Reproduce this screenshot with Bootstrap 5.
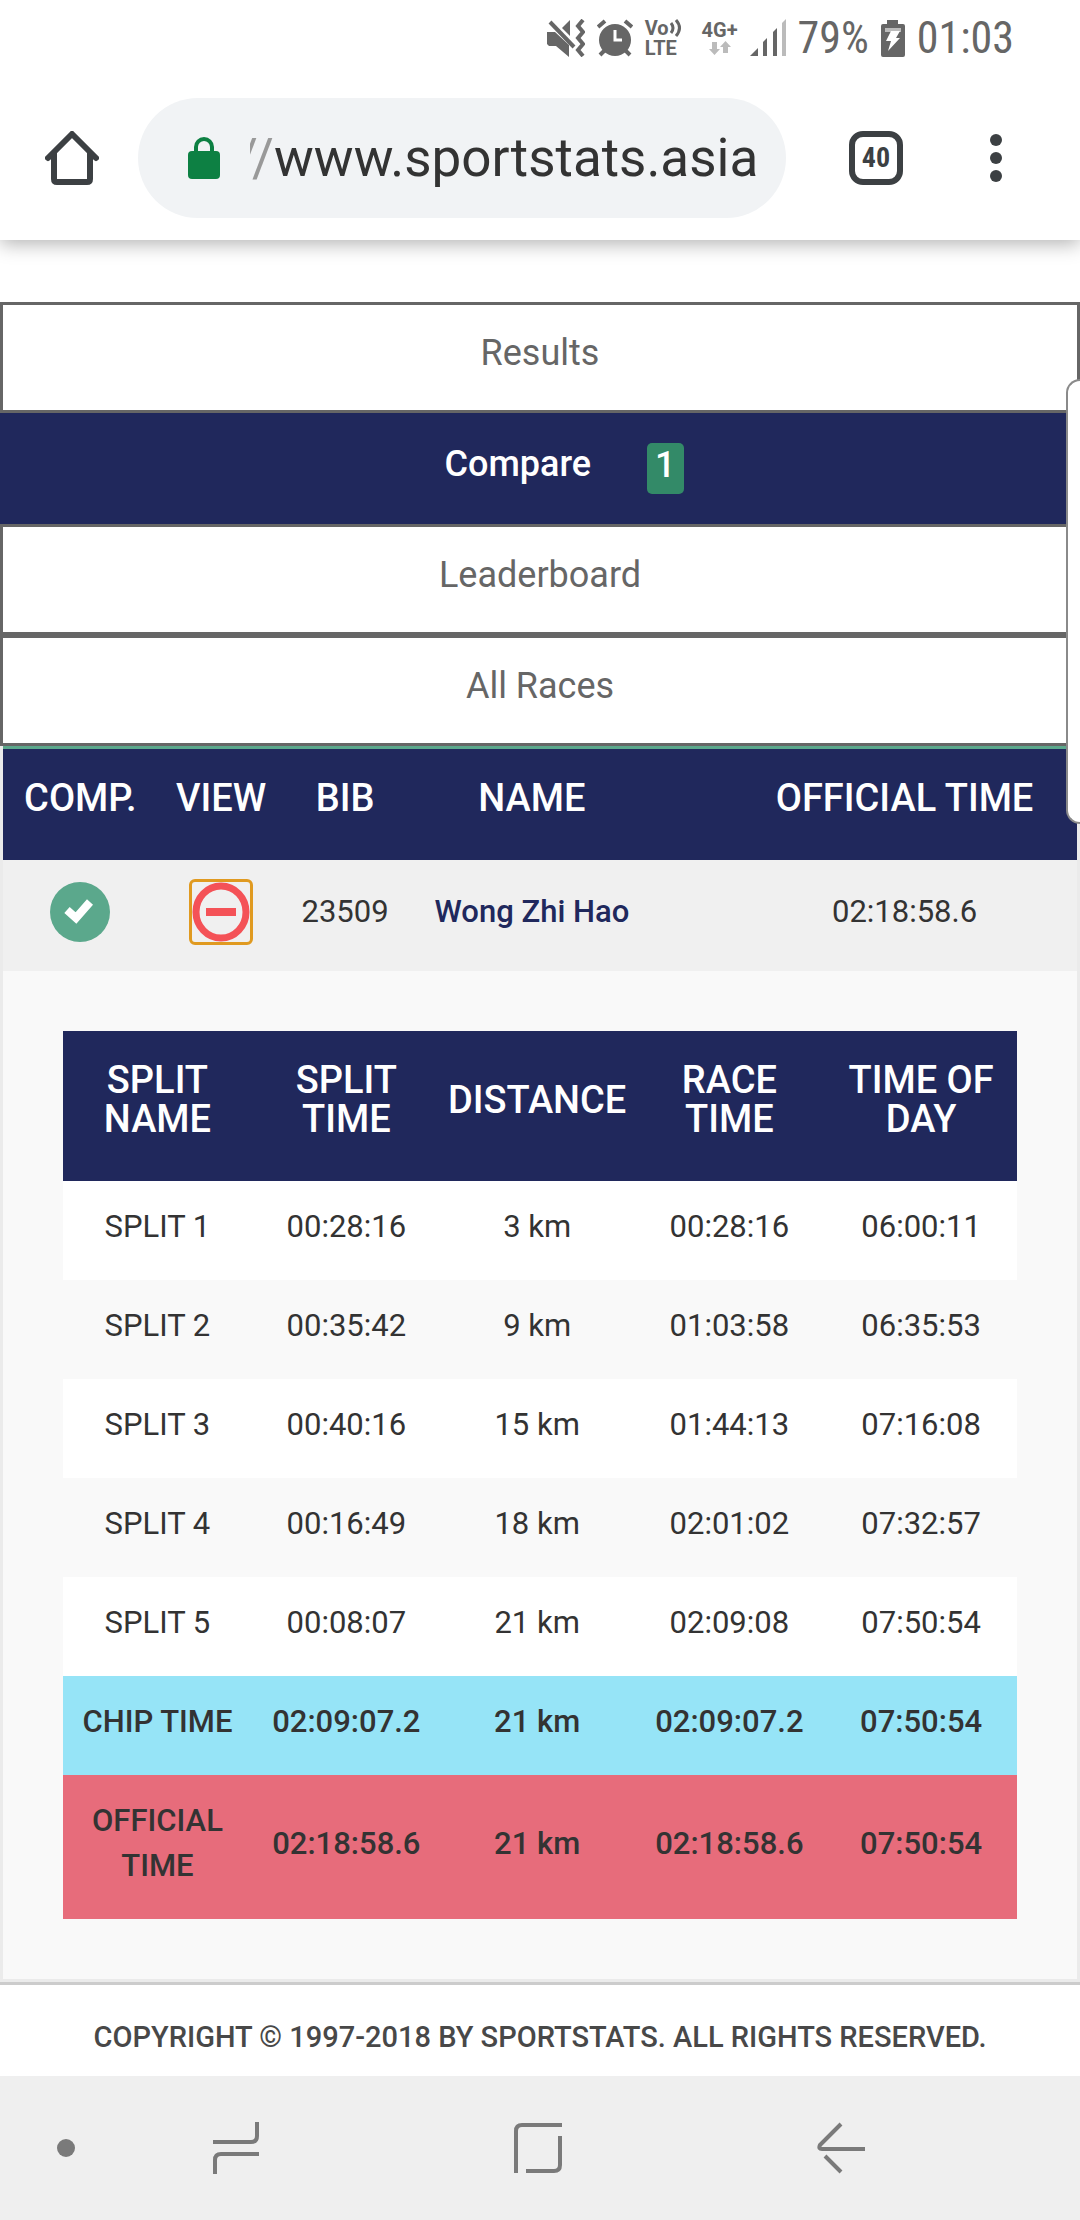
<!DOCTYPE html>
<html lang="en">
<head>
<meta charset="utf-8">
<meta name="viewport" content="width=device-width, initial-scale=1">
<title>Sportstats Asia - Compare</title>
<link href="https://cdn.jsdelivr.net/npm/bootstrap@5.3.0/dist/css/bootstrap.min.css" rel="stylesheet">
<style>
  :root { --navy: #20285c; --line: #666; --green: #5ba88c; }
  body { font-family: Roboto, "Liberation Sans", sans-serif; color: #333; background: #fff; }
  svg { display: block; flex: none; }
  button.plain { border: 0; padding: 0; background: none; color: inherit; flex: none; }

  /* phone status bar */
  .statusbar { height: 76px; padding-right: 66px; gap: 12px; color: #666; background: #fff; z-index: 1; }
  .statusbar .big { font: 400 44px/48px "Roboto Condensed", Roboto, sans-serif; }
  .tiny { font-size: 20px; line-height: 20px; font-weight: 700; }

  /* browser toolbar */
  .browserbar { height: 164px; padding: 0 78px 0 45px; color: #3c4043; box-shadow: 0 4px 18px rgba(0,0,0,.3); }
  .omnibox { height: 120px; margin-left: 39px; margin-right: 63px; padding: 0 24px 0 50px; border-radius: 60px; background: #f1f3f5; }
  .scheme, .omnibox input { font-size: 53px; line-height: 64px; }
  .scheme { flex: none; width: 24px; margin-left: 30px; color: #999; }
  .omnibox input { width: 0; padding: 0; border: 0; background: none; color: #333; outline: 0; }
  .browserbar .tabcount { width: 54px; height: 54px; margin-right: 87px; border: 6px solid #3c4043; border-radius: 14px; font: 700 28px/30px "Roboto Condensed", Roboto, sans-serif; }

  /* page tabs */
  .racetabs { margin-top: 62px; }
  .racetabs .nav-link { padding: 21px 0 30px; border: 3px solid var(--line); border-radius: 0; color: var(--line); font-size: 36px; line-height: 54px; text-align: center; }
  .racetabs .nav-link.active { padding-bottom: 27px; background: var(--navy); border-color: var(--navy); color: #fff; font-weight: 500; }
  .counter { margin-top: 6px; padding: 0 8px 6px; border-radius: 5px; background: #338a68; line-height: 45px; }

  /* results */
  .results { border: 3px solid #ebebeb; border-top: 0; background: #f9f9f9; }
  .results table { table-layout: fixed; width: 100%; text-align: center; }
  .results th { padding: 30px 0 42px; background: var(--navy); color: #fff; font-size: 38px; line-height: 39px; font-weight: 500; vertical-align: middle; }
  .results td { padding: 23px 0 31px; font-size: 31px; line-height: 45px; vertical-align: middle; }
  .racers { border-top: 3px solid var(--green); }
  .racers > tbody > tr > td { padding: 22px 0 29px; background: #f0f0f0; line-height: 60px; }
  .racers tr > .gap-start { padding-left: 74px !important; }
  .racers a { color: var(--navy); font-weight: 500; text-decoration: none; }
  .racers .viewbox { outline: 3px solid #e09a20; border-radius: 3px; }
  .detail { padding: 60px; }
  .splits tbody tr:nth-child(odd) { background: #fff; }
  .splits tbody tr.chip { background: #96e4f7; }
  .splits tbody tr.official { background: #e76c7b; }
  .splits .chip td, .splits .official td { font-weight: 500; }
  .copyright { padding: 37px 0 24px; border-top: 3px solid #ccc; color: #484848; font-size: 29px; line-height: 30px; font-weight: 500; }

  /* phone navigation */
  .softkeys { height: 144px; background: #efefef; color: #7a7a7a; }
  .softkeys .k1 { width: 12.2%; } .softkeys .k2 { width: 19.3%; } .softkeys .k3 { width: 36.7%; } .softkeys .k4 { width: 19.4%; }
  .softkeys button { display: flex; justify-content: center; }

  /* edge panel handle lying over the page */
  .edgehandle { position: absolute; top: 379px; right: 0; width: 14px; height: 445px; background: #fff; border: 2px solid #8a8a8a; border-right: 0; border-radius: 18px 0 0 18px; }
</style>
</head>
<body>
<div class="position-relative overflow-hidden">

  <div class="statusbar position-relative d-flex align-items-center justify-content-end">
    <svg width="38" height="38" viewBox="0 0 38 38" fill="currentColor"><path d="M0 13h8l14 13v12L9 27H2l-2-2zM15 9l8-8v16z"/><path d="M3 3l24 25" stroke="currentColor" stroke-width="4"/><path d="M36 1l-5 6 5 6-5 6 5 6-5 6 5 6" fill="none" stroke="currentColor" stroke-width="4"/></svg>
    <svg width="36" height="38" viewBox="0 0 36 38" fill="currentColor"><circle cx="18" cy="21" r="16"/><path d="M1 8l7-6M35 8l-7-6M3 36l5-5M33 36l-5-5" stroke="currentColor" stroke-width="4"/><path d="M18 11v10h7" fill="none" stroke="#fff" stroke-width="3"/></svg>
    <div class="tiny me-2">
      <div class="d-flex">Vo<svg width="13" height="20" viewBox="0 0 13 20" fill="none" stroke="currentColor" stroke-width="3"><path d="M2 5q4 5 0 10M7 2q7 8 0 16"/></svg></div>
      <div>LTE</div>
    </div>
    <div class="tiny d-flex flex-column align-items-center">4G+
      <svg width="22" height="16" viewBox="0 0 22 16" fill="#bbb"><path d="M3 2h5v7h3l-5.500 6L0 9h3zM14 13V7h-3l5.500-6L22 7h-3v6z"/></svg>
    </div>
    <svg width="36" height="38" viewBox="0 0 36 38" fill="currentColor"><path d="M0 37l8-8v8zM13 37V23l4-4v18zM23 37V13l4-4v28z"/><path d="M32 37V4l4-4v37z" fill="#bbb"/></svg>
    <span class="big">79%</span>
    <svg width="24" height="37" viewBox="0 0 24 37"><path d="M6 0h11v4h5q2 0 2 2v29q0 2-2 2H2q-2 0-2-2V6q0-2 2-2h4z" fill="#666"/><path d="M4 8h16v4H4z" fill="#bbb"/><path d="M10 11h9l-4 7h4L7 31l3-10H5z" fill="#fff"/></svg>
    <span class="big">01:03</span>
  </div>

  <header class="browserbar d-flex align-items-center">
    <button class="plain" type="button" aria-label="Home"><svg width="54" height="54" viewBox="0 0 54 54" fill="none" stroke="currentColor" stroke-width="6" stroke-linecap="round" stroke-linejoin="round"><path d="M3 27L27 3l24 24M9 22v26q0 3 3 3h30q3 0 3-3V22"/></svg></button>
    <div class="omnibox d-flex align-items-center flex-fill">
      <svg width="32" height="42" viewBox="0 0 32 42"><rect y="14" width="32" height="28" rx="4" fill="#0d8043"/><path d="M8 16v-6a8 8 0 0 1 16 0v6" fill="none" stroke="#0d8043" stroke-width="4"/></svg>
      <span class="scheme d-flex justify-content-end overflow-hidden">//</span>
      <input class="flex-grow-1" type="text" value="www.sportstats.asia" aria-label="Address">
    </div>
    <button class="plain tabcount" type="button" aria-label="Open tabs">40</button>
    <button class="plain" type="button" aria-label="Menu"><svg width="12" height="48" viewBox="0 0 12 48" fill="currentColor"><circle cx="6" cy="6" r="6"/><circle cx="6" cy="24" r="6"/><circle cx="6" cy="42" r="6"/></svg></button>
  </header>

  <main>
    <nav class="racetabs nav flex-column">
      <a class="nav-link" href="#">Results</a>
      <a class="nav-link active d-flex justify-content-center align-items-start" href="#"><span class="ms-5 me-5 pe-2">Compare</span><span class="counter">1</span></a>
      <a class="nav-link" href="#">Leaderboard</a>
      <a class="nav-link" href="#">All Races</a>
    </nav>

    <section class="results">
      <table class="racers">
        <colgroup><col style="width:14.4%"><col style="width:11.8%"><col style="width:11.3%"><col style="width:23.5%"><col></colgroup>
        <thead><tr><th>COMP.</th><th>VIEW</th><th>BIB</th><th>NAME</th><th class="gap-start">OFFICIAL TIME</th></tr></thead>
        <tbody><tr>
          <td><button class="plain d-block mx-auto" type="button" aria-label="Compared"><svg width="60" height="60" viewBox="0 0 60 60"><circle cx="30" cy="30" r="30" fill="#5ba88c"/><path d="M17 28l9 8 14-16" fill="none" stroke="#fff" stroke-width="8" stroke-linejoin="miter"/></svg></button></td>
          <td><button class="plain viewbox d-block mx-auto" type="button" aria-label="Hide splits"><svg width="58" height="60" viewBox="0 0 58 60"><ellipse cx="29" cy="30" rx="25" ry="26" fill="none" stroke="#f45257" stroke-width="7"/><path d="M14 30h30" stroke="#f45257" stroke-width="8"/></svg></button></td>
          <td>23509</td>
          <td><a href="#">Wong Zhi Hao</a></td>
          <td class="gap-start">02:18:58.6</td>
        </tr></tbody>
      </table>

      <div class="detail">
        <table class="splits">
          <colgroup><col style="width:19.8%"><col style="width:19.8%"><col style="width:20.2%"><col style="width:20.1%"><col></colgroup>
          <thead><tr><th>SPLIT<br>NAME</th><th>SPLIT<br>TIME</th><th>DISTANCE</th><th>RACE<br>TIME</th><th>TIME OF<br>DAY</th></tr></thead>
          <tbody>
            <tr><td>SPLIT 1</td><td>00:28:16</td><td>3 km</td><td>00:28:16</td><td>06:00:11</td></tr>
            <tr><td>SPLIT 2</td><td>00:35:42</td><td>9 km</td><td>01:03:58</td><td>06:35:53</td></tr>
            <tr><td>SPLIT 3</td><td>00:40:16</td><td>15 km</td><td>01:44:13</td><td>07:16:08</td></tr>
            <tr><td>SPLIT 4</td><td>00:16:49</td><td>18 km</td><td>02:01:02</td><td>07:32:57</td></tr>
            <tr><td>SPLIT 5</td><td>00:08:07</td><td>21 km</td><td>02:09:08</td><td>07:50:54</td></tr>
            <tr class="chip"><td>CHIP TIME</td><td>02:09:07.2</td><td>21 km</td><td>02:09:07.2</td><td>07:50:54</td></tr>
            <tr class="official"><td>OFFICIAL<br>TIME</td><td>02:18:58.6</td><td>21 km</td><td>02:18:58.6</td><td>07:50:54</td></tr>
          </tbody>
        </table>
      </div>
    </section>
  </main>

  <footer class="copyright text-center">COPYRIGHT © 1997-2018 BY SPORTSTATS. ALL RIGHTS RESERVED.</footer>

  <div class="softkeys d-flex align-items-center">
    <button class="plain k1" type="button" aria-label="Toggle bar"><svg width="18" height="18"><circle cx="9" cy="9" r="9" fill="currentColor"/></svg></button>
    <button class="plain k2" type="button" aria-label="Recent apps"><svg width="46" height="52" viewBox="0 0 46 52" fill="none" stroke="currentColor" stroke-width="4"><path d="M0 20h38q6 0 6-6V0M46 32H8q-6 0-6 6v14"/></svg></button>
    <button class="plain k3" type="button" aria-label="Home screen"><svg width="48" height="50" viewBox="0 0 48 50" fill="none" stroke="currentColor" stroke-width="4"><path d="M2 50V8q0-6 6-6h40M46 13v29q0 6-6 6H12"/></svg></button>
    <button class="plain k4" type="button" aria-label="Back"><svg width="48" height="52" viewBox="0 0 48 52" fill="none" stroke="currentColor" stroke-width="4"><path d="M24 2L3 23q-2 4 2 4h43M8 34l16 16"/></svg></button>
  </div>

  <div class="edgehandle"></div>
</div>
<script src="https://cdn.jsdelivr.net/npm/bootstrap@5.3.0/dist/js/bootstrap.bundle.min.js"></script>
</body>
</html>
